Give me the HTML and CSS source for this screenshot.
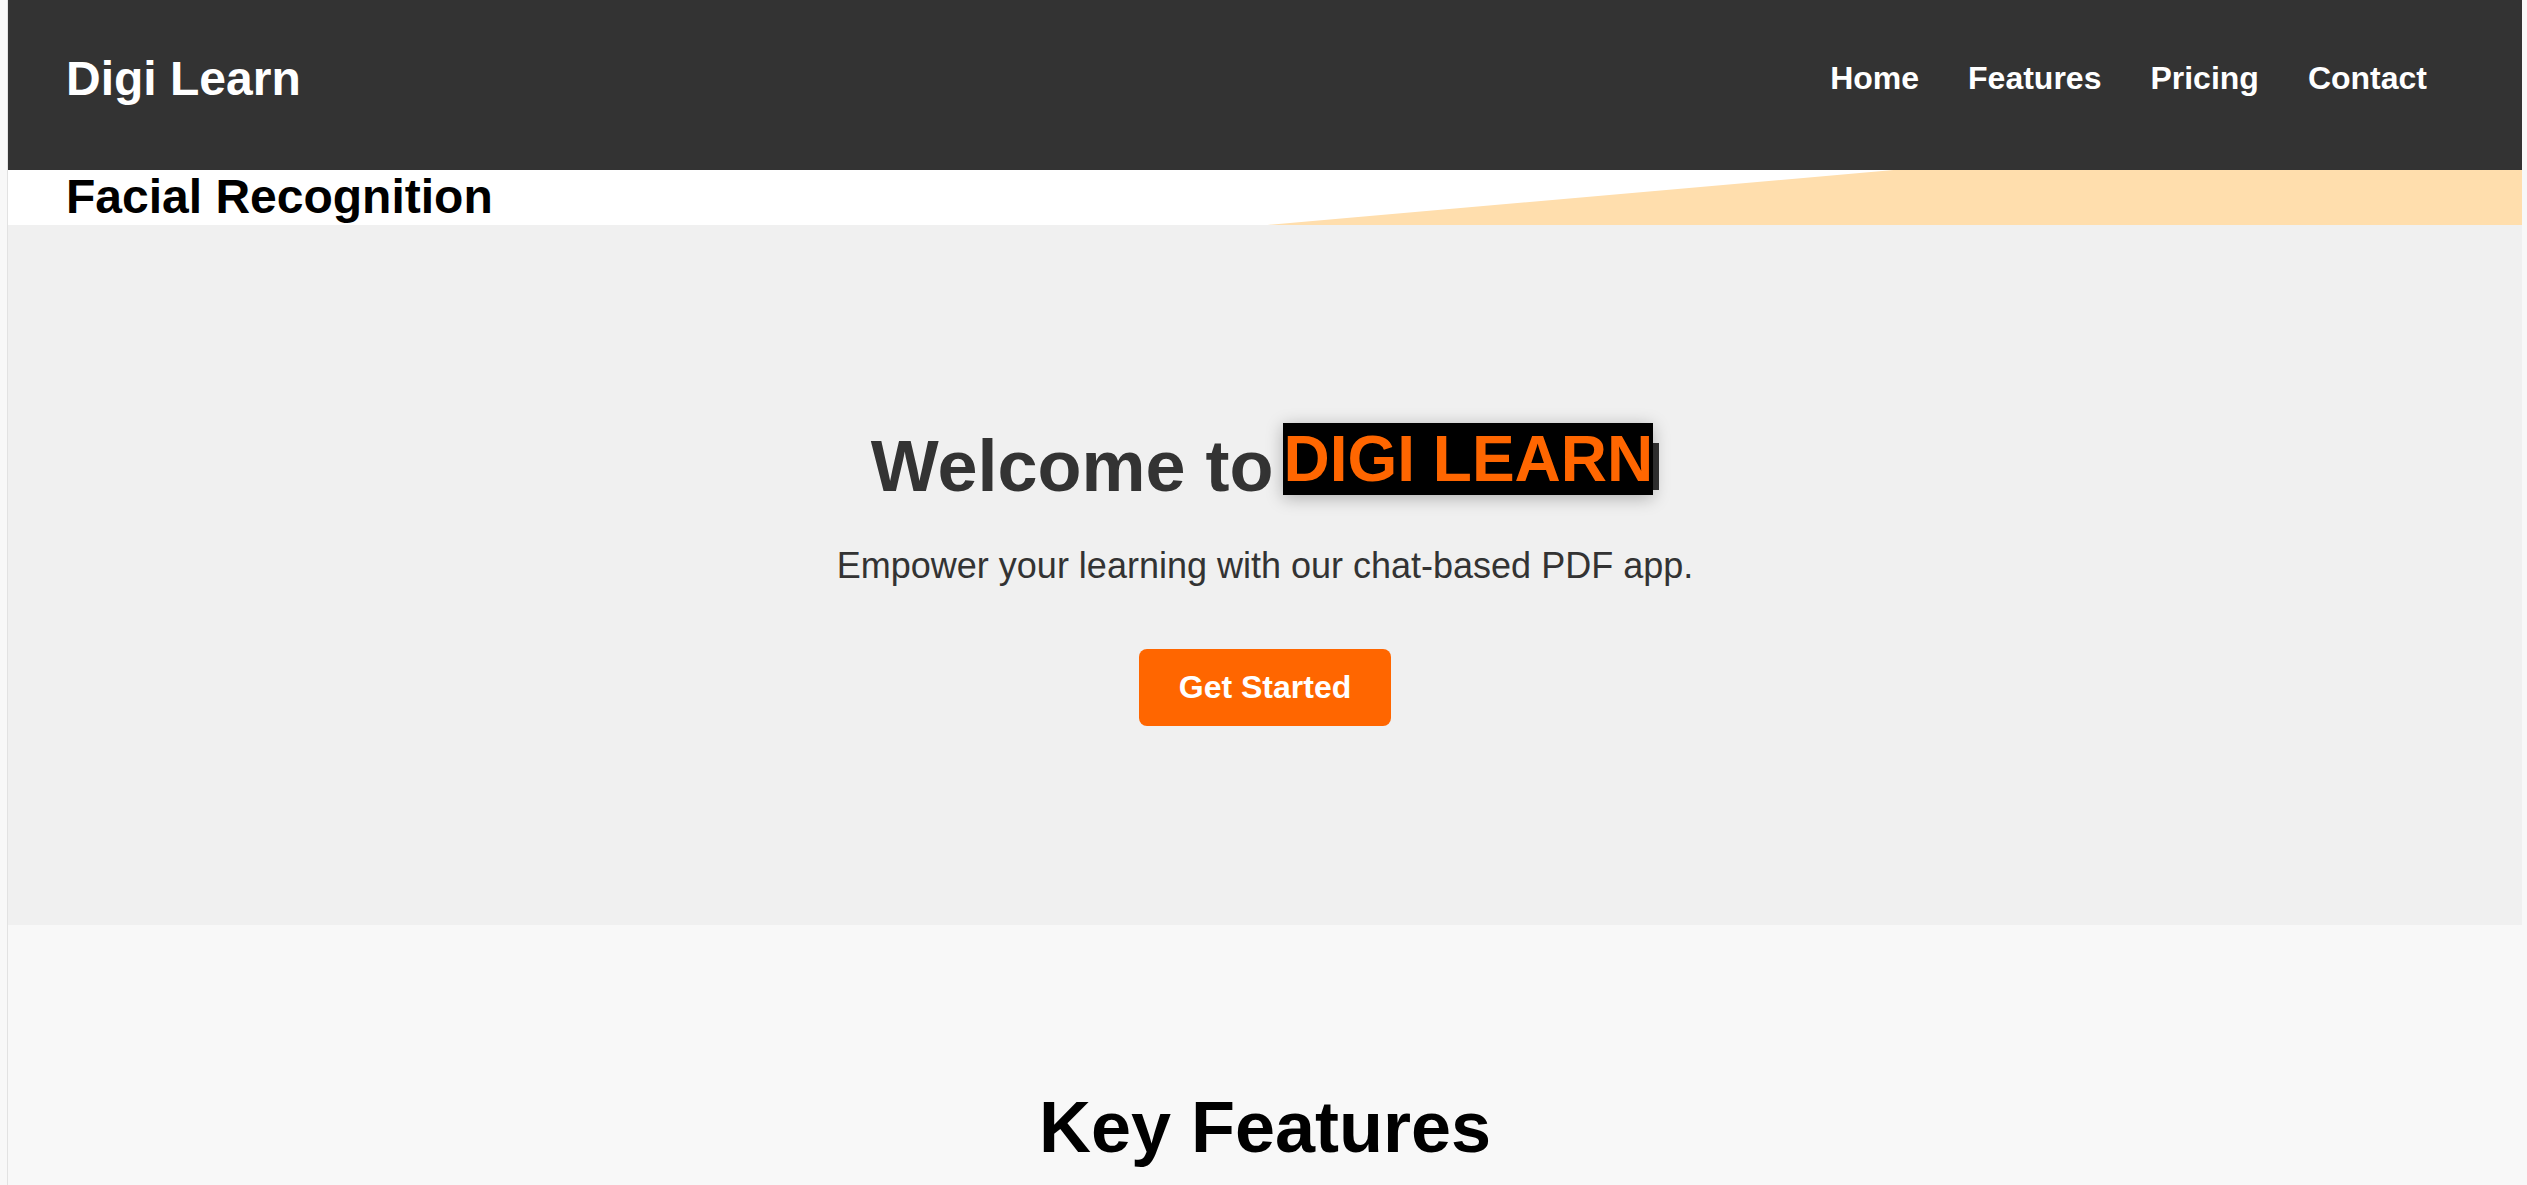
FILE: index.html
```html
<!DOCTYPE html>
<html lang="en">
<head>
<meta charset="utf-8">
<title>Digi Learn</title>
<link rel="stylesheet" href="styles.css">
</head>
<body>
<div class="page">
  <header class="site-header">
    <div class="logo">Digi Learn</div>
    <nav class="nav">
      <a class="nav-link" href="#">Home</a>
      <a class="nav-link" href="#">Features</a>
      <a class="nav-link" href="#">Pricing</a>
      <a class="nav-link" href="#">Contact</a>
    </nav>
  </header>
  <div class="banner">
    <h2 class="banner-title">Facial Recognition</h2>
  </div>
  <section class="hero">
    <h1 class="hero-title">Welcome to <span class="typed"><span class="hl">DIGI LEARN</span></span></h1>
    <p class="hero-sub">Empower your learning with our chat-based PDF app.</p>
    <div class="hero-actions"><a class="btn" href="#">Get Started</a></div>
  </section>
  <section class="features">
    <h2 class="features-title">Key Features</h2>
  </section>
</div>
</body>
</html>
```
FILE: styles.css
```css
html, body {
  margin: 0;
  padding: 0;
}
body {
  background: #f8f8f8;
  font-family: "Liberation Sans", Arial, sans-serif;
  padding: 0 5px 0 7px;
}
.page {
  border-left: 1px solid #e2e2e2;
  background: #f8f8f8;
}
.site-header {
  height: 170px;
  box-sizing: border-box;
  background: #333333;
  display: flex;
  align-items: center;
  justify-content: space-between;
  padding: 0 95px 13px 58px;
}
.logo {
  color: #ffffff;
  font-weight: bold;
  font-size: 48px;
}
.nav {
  display: flex;
  gap: 49px;
}
.nav-link {
  color: #ffffff;
  text-decoration: none;
  font-weight: bold;
  font-size: 32px;
}
.banner {
  position: relative;
  height: 55px;
  background: #ffffff;
  padding-left: 58px;
}
.banner::before {
  content: "";
  position: absolute;
  inset: 0;
  background: #ffdead;
  clip-path: polygon(75% 0, 100% 0, 100% 100%, 50.1% 100%);
}
.banner-title {
  position: relative;
  margin: 0;
  line-height: 53px;
  font-size: 48px;
  font-weight: bold;
  color: #000000;
  white-space: nowrap;
}
.hero {
  background: #f0f0f0;
  text-align: center;
  padding: 200px 0 199px;
}
.hero-title {
  margin: 0 0 38px;
  font-size: 72px;
  font-weight: bold;
  color: #333333;
}
.typed {
  display: inline-block;
  margin-left: -10px;
  font-size: 64px;
  line-height: 33.5px;
  padding-bottom: 13.5px;
  vertical-align: 10px;
  border-right: 6px solid #333333;
}
.hl {
  background: #000000;
  color: #ff6600;
  box-shadow: 0 3px 16px rgba(0, 0, 0, 0.28);
}
.hero-sub {
  margin: 0 0 62px;
  font-size: 36px;
  color: #333333;
}
.hero-actions {
  display: flex;
  justify-content: center;
}
.btn {
  display: block;
  background: #ff6600;
  color: #ffffff;
  text-decoration: none;
  font-weight: bold;
  font-size: 32px;
  padding: 20px 40px;
  border-radius: 8px;
}
.features {
  background: #f8f8f8;
  text-align: center;
  padding: 161px 0 200px;
  min-height: 600px;
}
.features-title {
  margin: 0;
  font-size: 72px;
  font-weight: bold;
  color: #000000;
}
```
